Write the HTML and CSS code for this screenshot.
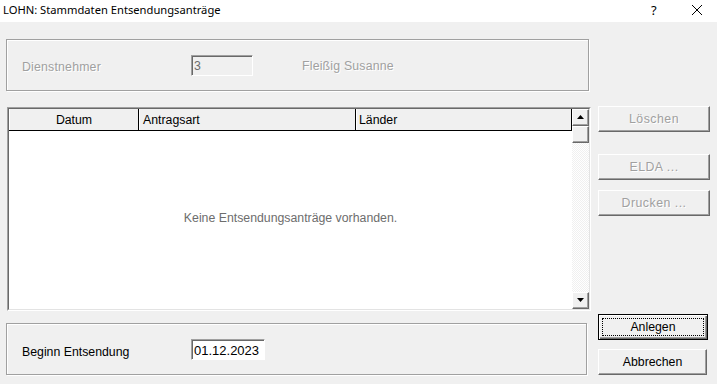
FILE: index.html
```html
<!DOCTYPE html>
<html lang="de">

<head>
    <meta charset="UTF-8">
    <title>LOHN: Stammdaten Entsendungsanträge</title>
    <link rel="stylesheet" href="styles.css">
</head>

<body>

    <div class="titlebar">
        <span class="title">LOHN: Stammdaten Entsendungsanträge</span>
        <span class="title-help">?</span>
        <span class="title-close">
            <svg width="12" height="12" viewBox="0 0 12 12">
                <path d="M1 1 L11 11 M11 1 L1 11" stroke="#000" stroke-width="1" fill="none" />
            </svg>
        </span>
    </div>

    <div class="dialog">
        <div class="left">
            <div class="group group-top">
                <span class="label disabled">Dienstnehmer</span>
                <div class="field field-dn disabled-field">3</div>
                <span class="name disabled">Fleißig Susanne</span>
            </div>

            <div class="list">
                <div class="list-inner">
                    <div class="list-main">
                        <div class="list-head">
                            <div class="col col-datum">Datum</div>
                            <div class="col col-art">Antragsart</div>
                            <div class="col col-land">Länder</div>
                        </div>
                        <div class="list-body">
                            <span class="empty">Keine Entsendungsanträge vorhanden.</span>
                        </div>
                    </div>
                    <div class="scrollbar">
                        <div class="sb-btn">
                            <svg width="7" height="4" viewBox="0 0 7 4"><path d="M3.5 0 L7 4 L0 4 Z" fill="#000" /></svg>
                        </div>
                        <div class="sb-thumb"></div>
                        <div class="sb-track"></div>
                        <div class="sb-btn">
                            <svg width="7" height="4" viewBox="0 0 7 4"><path d="M0 0 L7 0 L3.5 4 Z" fill="#000" /></svg>
                        </div>
                    </div>
                </div>
            </div>

            <div class="group group-bottom">
                <span class="label">Beginn Entsendung</span>
                <div class="field field-date">01.12.2023</div>
            </div>
        </div>

        <div class="right">
            <button class="btn btn-loeschen" disabled>Löschen</button>
            <button class="btn btn-elda" disabled>ELDA ...</button>
            <button class="btn btn-drucken" disabled>Drucken ...</button>
            <button class="btn btn-default btn-anlegen"><span class="focus">Anlegen</span></button>
            <button class="btn btn-abbrechen">Abbrechen</button>
        </div>
    </div>

</body>

</html>
```

FILE: styles.css
```css
* {
    box-sizing: border-box;
    margin: 0;
    padding: 0;
}

body {
    width: 717px;
    height: 384px;
    background: #f0f0f0;
    font-family: 'Liberation Sans', Arial, sans-serif;
    font-size: 12.3px;
    color: #000;
    overflow: hidden;
}

.titlebar {
    height: 22px;
    background: #fff;
    display: flex;
    align-items: center;
}

.title {
    font-family: 'Noto Sans', sans-serif;
    font-size: 11.2px;
    padding-left: 3px;
    padding-bottom: 3px;
    flex: 1;
}

.title-help {
    font-family: 'Noto Sans', sans-serif;
    font-size: 13px;
    width: 20px;
    margin-right: 20px;
    padding-bottom: 3px;
}

.title-close {
    width: 26px;
    display: flex;
    padding-bottom: 2px;
}

.dialog {
    display: flex;
    padding-top: 17px;
}

.left {
    width: 598px;
    padding-left: 6px;
}

/* etched group box */
.group {
    border: 1px solid #a0a0a0;
    box-shadow: inset 1px 1px #fff, 1px 1px #fff;
    display: flex;
    align-items: center;
    padding-left: 15px;
}

.group-top {
    width: 583px;
    height: 52px;
}

.group-bottom {
    width: 581px;
    height: 52px;
    margin-top: 12px;
}

.label {
    width: 169px;
}

.disabled {
    color: #a0a0a0;
    text-shadow: 1px 1px #fff;
    letter-spacing: 0.2px;
}

.group-top .label {
    padding-top: 4px;
}

.group-bottom .label {
    padding-top: 5px;
}

.name {
    margin-left: 49px;
    padding-top: 1px;
}

.field {
    height: 21px;
    border: 1px solid;
    border-color: #a0a0a0 #fff #fff #a0a0a0;
    box-shadow: inset 1px 1px #696969;
    padding: 3px 0 0 2px;
    line-height: 15px;
}

.field-dn {
    width: 62px;
    color: #6d6d6d;
    margin-top: 1px;
}

.field-date {
    width: 74px;
    background: #fff;
    font-size: 13px;
    margin-top: 1px;
}

/* list view */
.list {
    width: 584px;
    height: 204px;
    margin-top: 16px;
    margin-left: 1px;
    border: 1px solid;
    border-color: #a0a0a0 #fff #fff #a0a0a0;
}

.list-inner {
    height: 100%;
    border: 1px solid;
    border-color: #696969 #e3e3e3 #e3e3e3 #696969;
    display: flex;
    background: #fff;
}

.list-main {
    flex: 1;
    display: flex;
    flex-direction: column;
}

.list-head {
    display: flex;
    height: 22px;
    background: #f0f0f0;
    border-bottom: 1px solid #000;
}

.col {
    border-left: 1px solid #fff;
    border-right: 1px solid #000;
    line-height: 20px;
    padding-top: 1px;
}

.col-datum {
    width: 130px;
    text-align: center;
}

.col-art {
    width: 217px;
    padding-left: 3px;
}

.col-land {
    flex: 1;
    padding-left: 2px;
}

.list-body {
    flex: 1;
    display: flex;
    align-items: center;
    justify-content: center;
    padding-bottom: 4px;
}

.empty {
    color: #6d6d6d;
}

.scrollbar {
    width: 17px;
    display: flex;
    flex-direction: column;
}

.sb-btn,
.sb-thumb {
    height: 17px;
    background: #f0f0f0;
    border: 1px solid;
    border-color: #fff #696969 #696969 #fff;
    box-shadow: inset -1px -1px #a0a0a0;
    display: flex;
    align-items: center;
    justify-content: center;
}

.sb-btn svg {
    margin-left: -1px;
    margin-top: -1px;
}

.sb-track {
    flex: 1;
    background-color: #fff;
    background-image: repeating-conic-gradient(#f0f0f0 0 25%, #fff 0 50%);
    background-size: 2px 2px;
}

/* buttons */
.right {
    width: 119px;
    display: flex;
    flex-direction: column;
}

.btn {
    width: 112px;
    height: 26px;
    font-family: 'Liberation Sans', Arial, sans-serif;
    font-size: 12.3px;
    background: #f0f0f0;
    border: 1px solid;
    border-color: #fff #696969 #696969 #fff;
    box-shadow: inset -1px -1px #a0a0a0;
    color: #000;
}

.btn:disabled {
    color: #a0a0a0;
    text-shadow: 1px 1px #fff;
    letter-spacing: 0.5px;
}

.btn-loeschen {
    margin-top: 67px;
}

.btn-elda {
    margin-top: 22px;
}

.btn-drucken {
    margin-top: 10px;
}

.btn-anlegen {
    margin-top: 98px;
    width: 110px;
}

.btn-default {
    border: 1px solid #000;
    box-shadow: inset 1px 1px #fff, inset -1px -1px #696969, inset -2px -2px #a0a0a0;
    padding: 3px;
}

.focus {
    display: block;
    height: 100%;
    border: 1px dotted #000;
    line-height: 16px;
}

.btn-abbrechen {
    margin-top: 9px;
    width: 109px;
}
```
